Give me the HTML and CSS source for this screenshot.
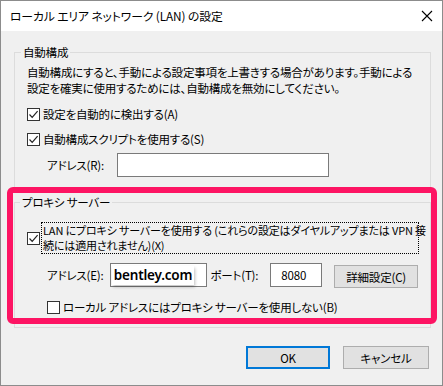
FILE: index.html
```html
<!DOCTYPE html>
<html lang="ja">

<head>
    <meta charset="UTF-8">
    <title>ローカル エリア ネットワーク (LAN) の設定</title>
    <link rel="stylesheet" href="styles.css">
</head>

<body>
    <div class="window">

        <!-- title bar -->
        <div class="titlebar">
            <span class="title">ローカル エリア ネットワーク (LAN) の設定</span>
            <svg class="close" width="12" height="12" viewBox="0 0 12 12">
                <path d="M1 1 L11 11 M11 1 L1 11" stroke="#000" stroke-width="1.1" fill="none" />
            </svg>
        </div>

        <div class="content">

            <!-- automatic configuration -->
            <div class="group group-auto">
                <div class="group-title">自動構成</div>
                <p class="desc">自動構成にすると、手動による設定事項を上書きする場合があります。手動による<br>設定を確実に使用するためには、自動構成を無効にしてください。</p>

                <div class="check check-first">
                    <span class="box"><svg width="11" height="11" viewBox="0 0 11 11"><path d="M1.5 5.5 L4.2 8.3 L9.6 2.2" stroke="#222" stroke-width="1.2" fill="none" /></svg></span>
                    <span>設定を自動的に検出する(A)</span>
                </div>
                <div class="check check-second">
                    <span class="box"><svg width="11" height="11" viewBox="0 0 11 11"><path d="M1.5 5.5 L4.2 8.3 L9.6 2.2" stroke="#222" stroke-width="1.2" fill="none" /></svg></span>
                    <span>自動構成スクリプトを使用する(S)</span>
                </div>

                <div class="field-row field-script">
                    <span class="field-label label-r">アドレス(R):</span>
                    <span class="textbox textbox-script"></span>
                </div>
            </div>

            <!-- proxy server -->
            <div class="group group-proxy">
                <div class="highlight"></div>
                <div class="group-title">プロキシ サーバー</div>

                <div class="check check-lan">
                    <span class="box"><svg width="11" height="11" viewBox="0 0 11 11"><path d="M1.5 5.5 L4.2 8.3 L9.6 2.2" stroke="#222" stroke-width="1.2" fill="none" /></svg></span>
                    <span class="focus-label">LAN にプロキシ サーバーを使用する (これらの設定はダイヤルアップまたは VPN 接<br>続には適用されません)(X)</span>
                </div>

                <div class="field-row field-proxy">
                    <span class="field-label label-e">アドレス(E):</span>
                    <span class="textbox textbox-address"><span class="typed">bentley.com</span></span>
                    <span class="field-label label-port">ポート(T):</span>
                    <span class="textbox textbox-port">8080</span>
                    <button class="btn btn-advanced">詳細設定(C)</button>
                </div>

                <div class="check check-local">
                    <span class="box"></span>
                    <span>ローカル アドレスにはプロキシ サーバーを使用しない(B)</span>
                </div>
            </div>

            <!-- dialog buttons -->
            <div class="buttons">
                <button class="btn btn-ok">OK</button>
                <button class="btn btn-cancel">キャンセル</button>
            </div>
        </div>
    </div>
</body>

</html>
```

FILE: styles.css
```css
body {
    margin: 0;
    background-color: #3a3a3a;
    font-family: "Noto Sans CJK JP", "Noto Sans", sans-serif;
    font-size: 11.5px;
    letter-spacing: -0.2px;
    color: #000000;
}

.window {
    width: 443px;
    height: 386px;
    box-sizing: border-box;
    border: 1px solid #8c8c8c;
    background-color: #f0f0f0;
    font-feature-settings: "palt";
}

.titlebar {
    height: 30px;
    background-color: #ffffff;
    display: flex;
    align-items: center;
    justify-content: space-between;
    padding: 0 9px 0 9px;
}

.title {
    line-height: 16px;
    font-size: 11.8px;
    letter-spacing: -0.1px;
}

.content {
    padding: 0 11px 0 13px;
}

/* group boxes */
.group {
    position: relative;
    border: 1px solid #dcdcdc;
    padding: 0 12px;
}

.group-auto {
    margin-top: 21px;
    padding-bottom: 11px;
}

.group-proxy {
    margin-top: 13px;
    padding-bottom: 12px;
}

.group-title {
    width: fit-content;
    background-color: #f0f0f0;
    padding: 0 2px;
    line-height: 16px;
    margin: -9px 0 0 -6px;
}

.group-proxy .group-title {
    margin-left: -7px;
}

/* red annotation frame */
.highlight {
    position: absolute;
    top: -16px;
    left: -8px;
    right: -7px;
    bottom: 3px;
    border: 6px solid #fd1463;
    border-radius: 6px;
    pointer-events: none;
}

.desc {
    margin: 4px 0 0 0;
    line-height: 16px;
    white-space: nowrap;
}

/* checkboxes */
.check {
    display: flex;
    align-items: center;
    line-height: 16px;
    white-space: nowrap;
}

.box {
    width: 13px;
    height: 13px;
    box-sizing: border-box;
    border: 1px solid #333333;
    background-color: #ffffff;
    margin-right: 3px;
    display: flex;
    align-items: center;
    justify-content: center;
    flex-shrink: 0;
}

.check-first {
    margin-top: 10px;
}

.check-second {
    margin-top: 9px;
}

.check-lan {
    margin-top: 12px;
}

.check-lan .box {
    margin-right: 1px;
}

.focus-label {
    width: 378px;
    box-sizing: border-box;
    border: 1px dotted #000000;
    padding: 0 1px;
    font-size: 11px;
    line-height: 15px;
    letter-spacing: -0.15px;
}

.check-local {
    margin: 11px 0 0 20px;
}

/* text fields */
.field-row {
    display: flex;
    align-items: flex-start;
}

.field-script {
    margin-top: 6px;
    padding-left: 20px;
}

.field-proxy {
    margin-top: 9px;
    padding-left: 20px;
}

.field-label {
    line-height: 24px;
    white-space: nowrap;
}

.label-r {
    width: 70px;
}

.label-e {
    width: 63px;
}

.label-port {
    width: 60px;
    margin-left: 4px;
}

.textbox {
    height: 24px;
    box-sizing: border-box;
    border: 1px solid #7a7a7a;
    background-color: #ffffff;
    line-height: 22px;
    padding-left: 10px;
}

.textbox-script {
    width: 212px;
}

.textbox-address {
    width: 97px;
    padding-left: 1px;
}

.textbox-port {
    width: 52px;
}

.typed {
    display: inline-block;
    font-family: "Noto Sans", sans-serif;
    font-weight: 600;
    font-size: 13.5px;
    letter-spacing: -0.2px;
    line-height: 19px;
    margin-top: 1px;
    padding: 0 2px;
    background-color: #ffffff;
    box-shadow: 1px 2px 3px rgba(0, 0, 0, 0.25);
}

/* buttons */
.btn {
    font-family: "Noto Sans CJK JP", "Noto Sans", sans-serif;
    font-size: 11.5px;
    letter-spacing: -0.2px;
    font-feature-settings: "palt";
    color: #000000;
    height: 23px;
    box-sizing: border-box;
    border: 1px solid #adadad;
    background-color: #e1e1e1;
    padding: 0;
}

.btn-advanced {
    width: 84px;
    margin: 2px 0 0 12px;
}

.buttons {
    display: flex;
    justify-content: flex-end;
    gap: 13px;
    margin: 18px 2px 0 0;
}

.btn-ok {
    width: 84px;
    border: 2px solid #0078d7;
}

.btn-cancel {
    width: 86px;
}
```
